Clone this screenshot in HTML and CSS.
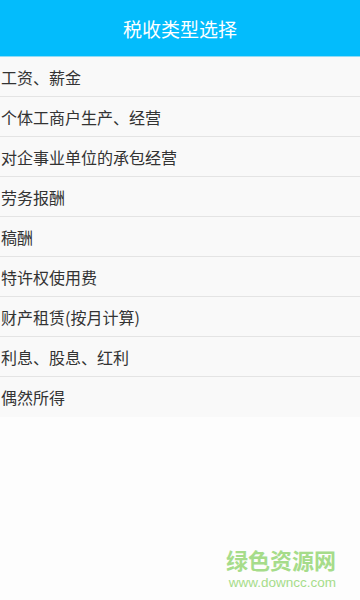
FILE: index.html
```html
<!DOCTYPE html>
<html lang="zh">
<head>
<meta charset="utf-8">
<link rel="stylesheet" href="styles.css">
</head>
<body>
<div class="page">
  <header class="bar">税收类型选择</header>
  <ul class="list">
    <li class="item">工资、薪金</li>
    <li class="item">个体工商户生产、经营</li>
    <li class="item">对企事业单位的承包经营</li>
    <li class="item">劳务报酬</li>
    <li class="item">稿酬</li>
    <li class="item">特许权使用费</li>
    <li class="item">财产租赁(按月计算)</li>
    <li class="item">利息、股息、红利</li>
    <li class="item">偶然所得</li>
  </ul>
  <div class="mark">
    <div class="mark-cn">绿色资源网</div>
    <div class="mark-en">www.downcc.com</div>
  </div>
</div>
</body>
</html>
```
FILE: styles.css
```css
* { box-sizing: border-box; }
html, body { margin: 0; padding: 0; }
body {
  width: 360px;
  height: 600px;
  overflow: hidden;
  background: #fdfdfd;
  font-family: "Noto Sans CJK SC", "Liberation Sans", sans-serif;
}
.page {
  height: 600px;
  display: flex;
  flex-direction: column;
}
.bar {
  height: 57px;
  background: #03bcfc;
  color: #ffffff;
  font-size: 19px;
  display: flex;
  align-items: center;
  justify-content: center;
  border-bottom: 1px solid #8fdcf6;
}
.list {
  list-style: none;
  margin: 0;
  padding: 0;
  background: #f9f9f9;
}
.item {
  height: 40px;
  display: flex;
  align-items: center;
  padding-left: 1px;
  font-size: 16px;
  color: #333333;
  border-bottom: 1px solid #e4e4e4;
}
.item:last-child { border-bottom: none; }
.mark {
  margin-top: auto;
  padding: 0 24px 10px 0;
  display: flex;
  flex-direction: column;
  align-items: flex-end;
  gap: 6px;
  color: #a6dc8a;
}
.mark-cn {
  font-size: 22px;
  line-height: 22px;
  font-weight: bold;
}
.mark-en {
  font-family: "Liberation Sans", sans-serif;
  font-size: 13.5px;
  line-height: 14px;
}
```
